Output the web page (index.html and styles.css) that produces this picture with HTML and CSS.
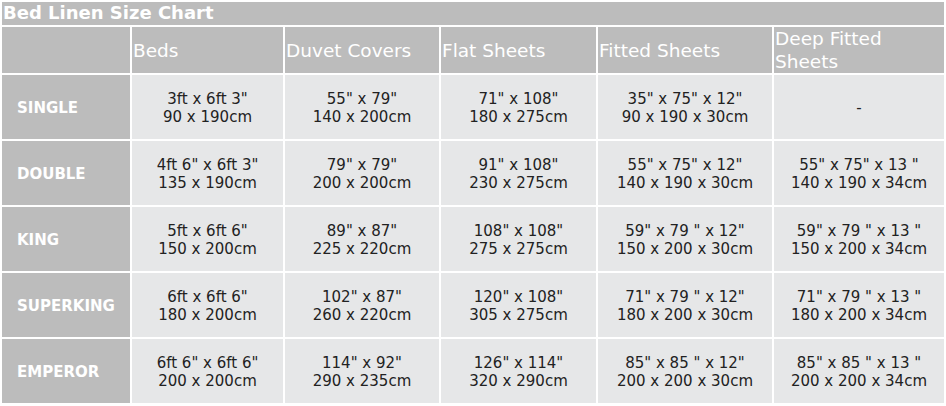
FILE: index.html
```html
<!DOCTYPE html>
<html>
<head>
<meta charset="utf-8">
<link rel="stylesheet" href="styles.css">
</head>
<body>
<table class="chart">
  <colgroup>
    <col class="c-label">
    <col class="c-beds">
    <col class="c-duvet">
    <col class="c-flat">
    <col class="c-fitted">
    <col class="c-deep">
  </colgroup>
  <tr class="title-row"><th colspan="6" class="title">Bed Linen Size Chart</th></tr>
  <tr class="head-row">
    <th class="corner"></th>
    <th class="head">Beds</th>
    <th class="head">Duvet Covers</th>
    <th class="head">Flat Sheets</th>
    <th class="head">Fitted Sheets</th>
    <th class="head">Deep Fitted Sheets</th>
  </tr>
  <tr class="row">
    <th class="label">SINGLE</th>
    <td>3ft x 6ft 3"<br>90 x 190cm</td>
    <td>55" x 79"<br>140 x 200cm</td>
    <td>71" x 108"<br>180 x 275cm</td>
    <td>35" x 75" x 12"<br>90 x 190 x 30cm</td>
    <td>-</td>
  </tr>
  <tr class="row">
    <th class="label">DOUBLE</th>
    <td>4ft 6" x 6ft 3"<br>135 x 190cm</td>
    <td>79" x 79"<br>200 x 200cm</td>
    <td>91" x 108"<br>230 x 275cm</td>
    <td>55" x 75" x 12"<br>140 x 190 x 30cm</td>
    <td>55" x 75" x 13 "<br>140 x 190 x 34cm</td>
  </tr>
  <tr class="row">
    <th class="label">KING</th>
    <td>5ft x 6ft 6"<br>150 x 200cm</td>
    <td>89" x 87"<br>225 x 220cm</td>
    <td>108" x 108"<br>275 x 275cm</td>
    <td>59" x 79 " x 12"<br>150 x 200 x 30cm</td>
    <td>59" x 79 " x 13 "<br>150 x 200 x 34cm</td>
  </tr>
  <tr class="row">
    <th class="label">SUPERKING</th>
    <td>6ft x 6ft 6"<br>180 x 200cm</td>
    <td>102" x 87"<br>260 x 220cm</td>
    <td>120" x 108"<br>305 x 275cm</td>
    <td>71" x 79 " x 12"<br>180 x 200 x 30cm</td>
    <td>71" x 79 " x 13 "<br>180 x 200 x 34cm</td>
  </tr>
  <tr class="row">
    <th class="label">EMPEROR</th>
    <td>6ft 6" x 6ft 6"<br>200 x 200cm</td>
    <td>114" x 92"<br>290 x 235cm</td>
    <td>126" x 114"<br>320 x 290cm</td>
    <td>85" x 85 " x 12"<br>200 x 200 x 30cm</td>
    <td>85" x 85 " x 13 "<br>200 x 200 x 34cm</td>
  </tr>
</table>
</body>
</html>
```
FILE: styles.css
```css
html, body {
  margin: 0;
  padding: 0;
  background: #ffffff;
}
body {
  font-family: "DejaVu Sans", Verdana, sans-serif;
}
.chart {
  border-collapse: separate;
  border-spacing: 2px;
  table-layout: fixed;
  width: 946px;
}
.c-label { width: 128px; }
.c-beds { width: 151px; }
.c-duvet { width: 154px; }
.c-flat { width: 155px; }
.c-fitted { width: 174px; }
.c-deep { width: 170px; }

.chart th, .chart td {
  padding: 0;
}
.title-row { height: 23px; }
.chart .title {
  background: #bcbcbc;
  color: #ffffff;
  font-size: 18px;
  font-weight: bold;
  text-align: left;
  padding: 0 0 0 1px;
  line-height: 21px;
  vertical-align: top;
}
.head-row { height: 45px; }
.corner {
  background: #bcbcbc;
}
.chart .head {
  background: #bcbcbc;
  color: #ffffff;
  font-size: 18.5px;
  font-weight: normal;
  text-align: left;
  line-height: 23px;
  padding: 0 0 0 1px;
  vertical-align: middle;
}
.row { height: 64px; }
.chart .label {
  background: #bcbcbc;
  color: #ffffff;
  font-size: 15px;
  font-weight: bold;
  text-align: left;
  padding: 2px 0 0 15px;
  vertical-align: middle;
}
.chart .row td {
  background: #e6e7e8;
  color: #222222;
  font-size: 15px;
  line-height: 18px;
  text-align: center;
  padding-top: 2px;
  vertical-align: middle;
}
```
